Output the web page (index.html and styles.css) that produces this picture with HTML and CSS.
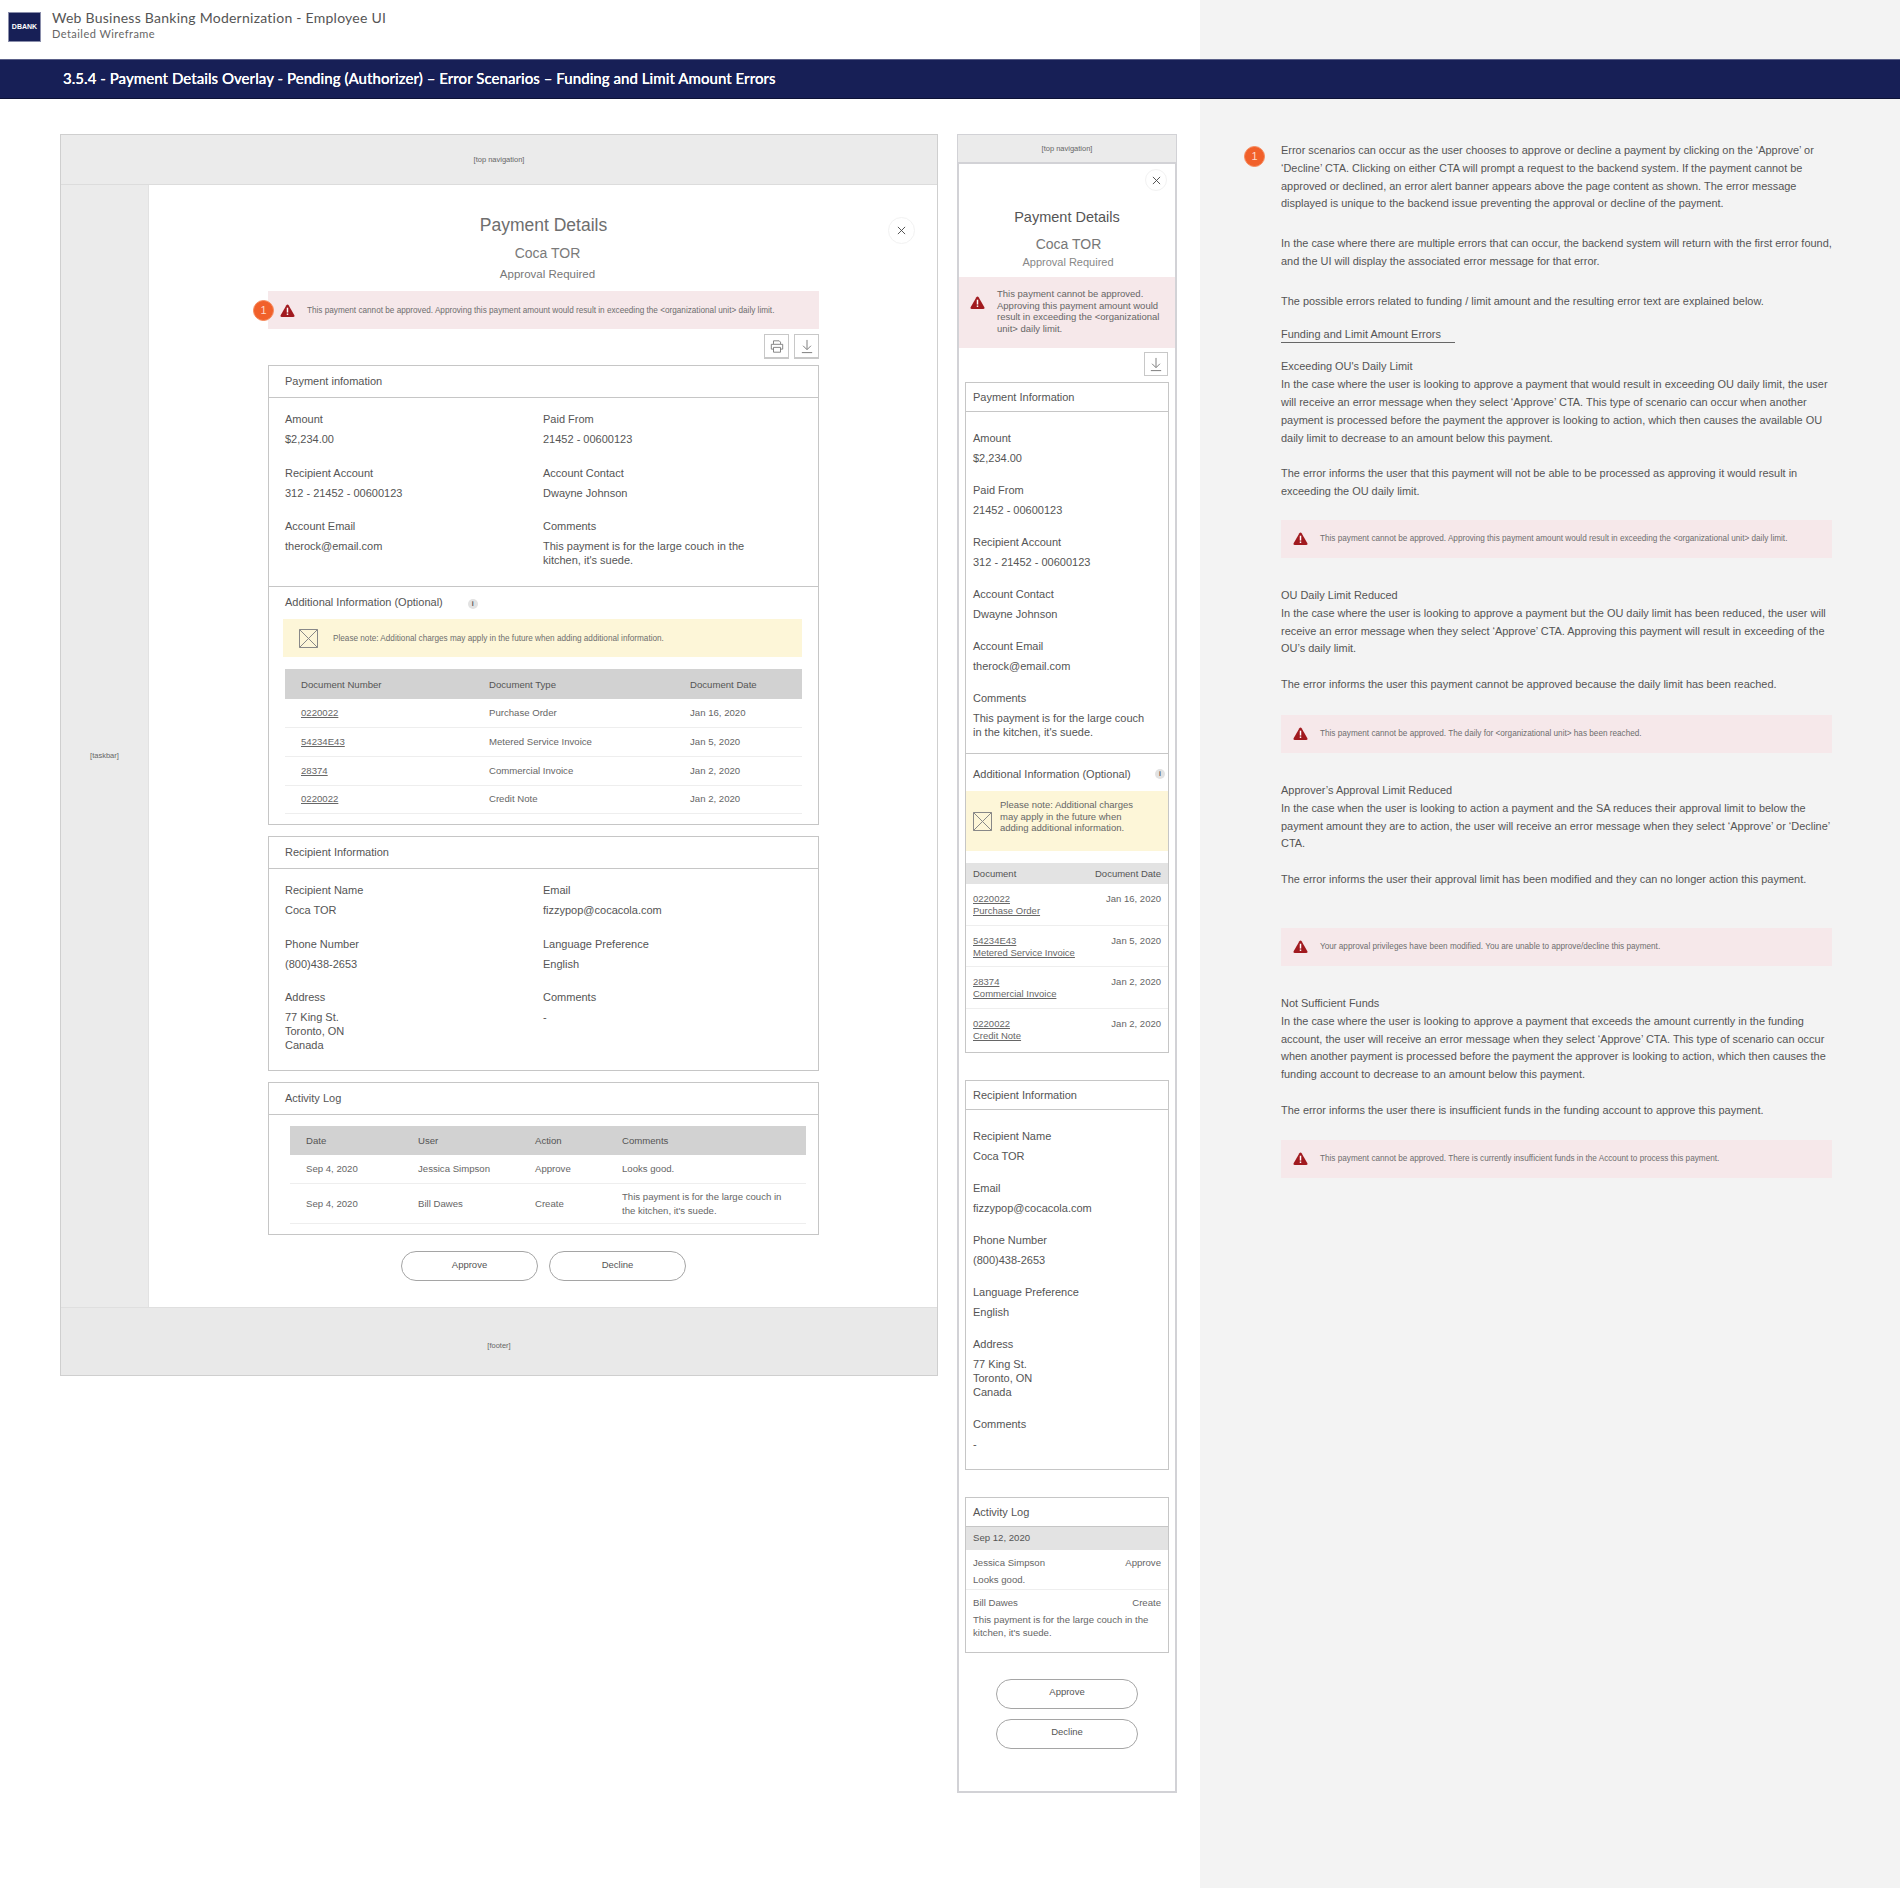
FILE: index.html
```html
<!DOCTYPE html>
<html lang="en">
<head>
    <meta charset="UTF-8">
    <meta name="viewport" content="width=device-width, initial-scale=1.0">
    <title>Web Business Banking Modernization - Employee UI</title>
    <link rel="stylesheet" href="styles.css">
</head>
<body>
    <svg class="defs" width="0" height="0">
        <symbol id="warn" viewBox="0 0 16 14">
            <path d="M8 .6c.5 0 .9.3 1.2.8l6.2 10.6c.5.9-.1 1.9-1.1 1.9H1.7c-1 0-1.6-1-1.1-1.9L6.800 1.400C7.100.9 7.500.6 8 .6z" fill="#a11a1f"/>
            <rect x="7.200" y="4" width="1.600" height="5.200" fill="#fff"/>
            <rect x="7.200" y="10.200" width="1.600" height="1.600" fill="#fff"/>
        </symbol>
        <symbol id="down" viewBox="0 0 14 16">
            <path d="M7 1v10M2.800 7.200 7 11.400l4.200-4.200M1.500 14.500h11" fill="none" stroke="#777" stroke-width="1"/>
        </symbol>
        <symbol id="print" viewBox="0 0 16 16">
            <path d="M4 5V1.500h6.500L12 3v2M4 11H1.500V5.500h13V11H12M4 9h8v5.500H4z" fill="none" stroke="#777" stroke-width="1"/>
        </symbol>
        <symbol id="close" viewBox="0 0 10 10">
            <path d="M1 1l8 8M9 1l-8 8" fill="none" stroke="#444" stroke-width="1"/>
        </symbol>
        <symbol id="crossbox" viewBox="0 0 19 19">
            <path d="M.5.500h18v18H.5zM.5.500l18 18M18.500.500l-18 18" fill="none" stroke="#888" stroke-width="1"/>
        </symbol>
    </svg>

    <header class="doc-header">
        <div class="logo">DBANK</div>
        <div class="doc-text">
            <div class="doc-title">Web Business Banking Modernization - Employee UI</div>
            <div class="doc-sub">Detailed Wireframe</div>
        </div>
    </header>
    <div class="section-bar">3.5.4 - Payment Details Overlay - Pending (Authorizer) – Error Scenarios – Funding and Limit Amount Errors</div>

    <main class="sheet">
        <div class="wires">
            <!-- desktop frame -->
            <section class="desktop">
                <div class="top-nav">[top navigation]</div>
                <div class="desktop-mid">
                    <div class="taskbar">[taskbar]</div>
                    <div class="overlay">
                        <span class="close-btn"><svg><use href="#close"/></svg></span>
                        <h2 class="overlay-title">Payment Details</h2>
                        <div class="overlay-name">Coca TOR</div>
                        <div class="overlay-status">Approval Required</div>

                        <div class="alert alert-flag">
                            <span class="badge badge-over">1</span>
                            <svg class="warn-icon"><use href="#warn"/></svg>
                            <span>This payment cannot be approved. Approving this payment amount would result in exceeding the &lt;organizational unit&gt; daily limit.</span>
                        </div>

                        <div class="tools">
                            <span class="tool"><svg><use href="#print"/></svg></span>
                            <span class="tool"><svg><use href="#down"/></svg></span>
                        </div>

                        <div class="card">
                            <div class="card-head">Payment infomation</div>
                            <div class="fields">
                                <div class="field"><label>Amount</label><div>$2,234.00</div></div>
                                <div class="field"><label>Paid From</label><div>21452 - 00600123</div></div>
                                <div class="field"><label>Recipient Account</label><div>312 - 21452 - 00600123</div></div>
                                <div class="field"><label>Account Contact</label><div>Dwayne Johnson</div></div>
                                <div class="field"><label>Account Email</label><div>therock@email.com</div></div>
                                <div class="field"><label>Comments</label><div>This payment is for the large couch in the<br>kitchen, it's suede.</div></div>
                            </div>
                            <div class="extra">
                                <div class="extra-title">Additional Information (Optional)<span class="info">i</span></div>
                                <div class="note">
                                    <svg class="note-icon"><use href="#crossbox"/></svg>
                                    <span>Please note: Additional charges may apply in the future when adding additional information.</span>
                                </div>
                                <table class="grid docs">
                                    <thead>
                                        <tr><th>Document Number</th><th>Document Type</th><th>Document Date</th></tr>
                                    </thead>
                                    <tbody>
                                        <tr><td><u>0220022</u></td><td>Purchase Order</td><td>Jan 16, 2020</td></tr>
                                        <tr><td><u>54234E43</u></td><td>Metered Service Invoice</td><td>Jan 5, 2020</td></tr>
                                        <tr><td><u>28374</u></td><td>Commercial Invoice</td><td>Jan 2, 2020</td></tr>
                                        <tr><td><u>0220022</u></td><td>Credit Note</td><td>Jan 2, 2020</td></tr>
                                    </tbody>
                                </table>
                            </div>
                        </div>

                        <div class="card">
                            <div class="card-head">Recipient Information</div>
                            <div class="fields fields-short">
                                <div class="field"><label>Recipient Name</label><div>Coca TOR</div></div>
                                <div class="field"><label>Email</label><div>fizzypop@cocacola.com</div></div>
                                <div class="field"><label>Phone Number</label><div>(800)438-2653</div></div>
                                <div class="field"><label>Language Preference</label><div>English</div></div>
                                <div class="field"><label>Address</label><div>77 King St.<br>Toronto, ON<br>Canada</div></div>
                                <div class="field"><label>Comments</label><div>-</div></div>
                            </div>
                        </div>

                        <div class="card">
                            <div class="card-head">Activity Log</div>
                            <table class="grid log">
                                <thead>
                                    <tr><th>Date</th><th>User</th><th>Action</th><th>Comments</th></tr>
                                </thead>
                                <tbody>
                                    <tr><td>Sep 4, 2020</td><td>Jessica Simpson</td><td>Approve</td><td>Looks good.</td></tr>
                                    <tr><td>Sep 4, 2020</td><td>Bill Dawes</td><td>Create</td><td>This payment is for the large couch in<br>the kitchen, it's suede.</td></tr>
                                </tbody>
                            </table>
                        </div>

                        <div class="actions">
                            <button>Approve</button>
                            <button>Decline</button>
                        </div>
                    </div>
                </div>
                <div class="footer">[footer]</div>
            </section>

            <!-- mobile frame -->
            <section class="mobile">
                <div class="top-nav top-nav-m">[top navigation]</div>
                <span class="close-btn close-btn-m"><svg><use href="#close"/></svg></span>
                <h2 class="m-title">Payment Details</h2>
                <div class="m-name">Coca TOR</div>
                <div class="m-status">Approval Required</div>
                <div class="m-alert">
                    <svg class="warn-icon"><use href="#warn"/></svg>
                    <span>This payment cannot be approved.<br>Approving this payment amount would<br>result in exceeding the &lt;organizational<br>unit&gt; daily limit.</span>
                </div>
                <div class="tools tools-m">
                    <span class="tool"><svg><use href="#down"/></svg></span>
                </div>

                <div class="m-card">
                    <div class="m-head">Payment Information</div>
                    <div class="m-fields">
                        <div class="field"><label>Amount</label><div>$2,234.00</div></div>
                        <div class="field"><label>Paid From</label><div>21452 - 00600123</div></div>
                        <div class="field"><label>Recipient Account</label><div>312 - 21452 - 00600123</div></div>
                        <div class="field"><label>Account Contact</label><div>Dwayne Johnson</div></div>
                        <div class="field"><label>Account Email</label><div>therock@email.com</div></div>
                        <div class="field"><label>Comments</label><div>This payment is for the large couch<br>in the kitchen, it's suede.</div></div>
                    </div>
                    <div class="m-extra">
                        <div class="m-extra-title"><span>Additional Information (Optional)</span><span class="info">i</span></div>
                        <div class="m-note">
                            <svg class="note-icon"><use href="#crossbox"/></svg>
                            <span>Please note: Additional charges<br>may apply in the future when<br>adding additional information.</span>
                        </div>
                        <div class="m-doc-head"><span>Document</span><span>Document Date</span></div>
                        <div class="m-doc"><div><u>0220022</u><br><u>Purchase Order</u></div><span>Jan 16, 2020</span></div>
                        <div class="m-doc"><div><u>54234E43</u><br><u>Metered Service Invoice</u></div><span>Jan 5, 2020</span></div>
                        <div class="m-doc"><div><u>28374</u><br><u>Commercial Invoice</u></div><span>Jan 2, 2020</span></div>
                        <div class="m-doc m-doc-last"><div><u>0220022</u><br><u>Credit Note</u></div><span>Jan 2, 2020</span></div>
                    </div>
                </div>

                <div class="m-card m-card-recipient">
                    <div class="m-head">Recipient Information</div>
                    <div class="m-fields m-fields-end">
                        <div class="field"><label>Recipient Name</label><div>Coca TOR</div></div>
                        <div class="field"><label>Email</label><div>fizzypop@cocacola.com</div></div>
                        <div class="field"><label>Phone Number</label><div>(800)438-2653</div></div>
                        <div class="field"><label>Language Preference</label><div>English</div></div>
                        <div class="field"><label>Address</label><div>77 King St.<br>Toronto, ON<br>Canada</div></div>
                        <div class="field"><label>Comments</label><div>-</div></div>
                    </div>
                </div>

                <div class="m-card m-card-log">
                    <div class="m-head">Activity Log</div>
                    <div class="m-log-date">Sep 12, 2020</div>
                    <div class="m-log-row m-log-first">
                        <div class="m-log-top"><span>Jessica Simpson</span><span>Approve</span></div>
                        <div>Looks good.</div>
                    </div>
                    <div class="m-log-row m-log-last">
                        <div class="m-log-top"><span>Bill Dawes</span><span>Create</span></div>
                        <div>This payment is for the large couch in the<br>kitchen, it's suede.</div>
                    </div>
                </div>

                <div class="m-actions">
                    <button>Approve</button>
                    <button>Decline</button>
                </div>
            </section>
        </div>

        <!-- annotation column -->
        <aside class="notes">
            <span class="badge badge-note">1</span>
            <p class="first">Error scenarios can occur as the user chooses to approve or decline a payment by clicking on the ‘Approve’ or<br>‘Decline’ CTA. Clicking on either CTA will prompt a request to the backend system. If the payment cannot be<br>approved or declined, an error alert banner appears above the page content as shown. The error message<br>displayed is unique to the backend issue preventing the approval or decline of the payment.</p>
            <p class="gap-l">In the case where there are multiple errors that can occur, the backend system will return with the first error found,<br>and the UI will display the associated error message for that error.</p>
            <p class="gap-l">The possible errors related to funding / limit amount and the resulting error text are explained below.</p>
            <p class="gap-s"><span class="notes-heading">Funding and Limit Amount Errors</span></p>
            <p class="gap-s">Exceeding OU's Daily Limit<br>In the case where the user is looking to approve a payment that would result in exceeding OU daily limit, the user<br>will receive an error message when they select ‘Approve’ CTA. This type of scenario can occur when another<br>payment is processed before the payment the approver is looking to action, which then causes the available OU<br>daily limit to decrease to an amount below this payment.</p>
            <p class="gap-m">The error informs the user that this payment will not be able to be processed as approving it would result in<br>exceeding the OU daily limit.</p>
            <div class="alert alert-note alert-near">
                <svg class="warn-icon"><use href="#warn"/></svg>
                <span>This payment cannot be approved. Approving this payment amount would result in exceeding the &lt;organizational unit&gt; daily limit.</span>
            </div>
            <p class="gap-xl">OU Daily Limit Reduced<br>In the case where the user is looking to approve a payment but the OU daily limit has been reduced, the user will<br>receive an error message when they select ‘Approve’ CTA. Approving this payment will result in exceeding of the<br>OU’s daily limit.</p>
            <p class="gap-m">The error informs the user this payment cannot be approved because the daily limit has been reached.</p>
            <div class="alert alert-note alert-low">
                <svg class="warn-icon"><use href="#warn"/></svg>
                <span>This payment cannot be approved. The daily for &lt;organizational unit&gt; has been reached.</span>
            </div>
            <p class="gap-xl">Approver’s Approval Limit Reduced<br>In the case when the user is looking to action a payment and the SA reduces their approval limit to below the<br>payment amount they are to action, the user will receive an error message when they select ‘Approve’ or ‘Decline’<br>CTA.</p>
            <p class="gap-m">The error informs the user their approval limit has been modified and they can no longer action this payment.</p>
            <div class="alert alert-note alert-far">
                <svg class="warn-icon"><use href="#warn"/></svg>
                <span>Your approval privileges have been modified. You are unable to approve/decline this payment.</span>
            </div>
            <p class="gap-xl">Not Sufficient Funds<br>In the case where the user is looking to approve a payment that exceeds the amount currently in the funding<br>account, the user will receive an error message when they select ‘Approve’ CTA. This type of scenario can occur<br>when another payment is processed before the payment the approver is looking to action, which then causes the<br>funding account to decrease to an amount below this payment.</p>
            <p class="gap-m">The error informs the user there is insufficient funds in the funding account to approve this payment.</p>
            <div class="alert alert-note">
                <svg class="warn-icon"><use href="#warn"/></svg>
                <span>This payment cannot be approved. There is currently insufficient funds in the Account to process this payment.</span>
            </div>
        </aside>
    </main>
</body>
</html>
```

FILE: styles.css
```css
* {
    box-sizing: border-box;
}
body {
    margin: 0;
    width: 1900px;
    height: 1888px;
    overflow: hidden;
    font-family: "Liberation Sans", Arial, sans-serif;
    color: #555;
    background-color: #f3f3f3;
}
.defs {
    position: absolute;
}

/* document header */
.doc-header {
    width: 1200px;
    height: 59px;
    background: #fff;
    padding: 12px 0 0 8px;
    display: flex;
    gap: 11px;
}
.logo {
    width: 33px;
    height: 30px;
    background: #171f56;
    border: 1px solid #8a8eab;
    color: #fff;
    font-size: 7px;
    font-weight: bold;
    line-height: 28px;
    text-align: center;
}
.doc-text {
    margin-top: -1px;
}
.doc-title {
    font-family: Lato, sans-serif;
    font-size: 14px;
    line-height: 14px;
    letter-spacing: 0.25px;
    color: #555;
}
.doc-sub {
    font-family: Lato, sans-serif;
    font-size: 11px;
    line-height: 12px;
    margin-top: 3px;
    letter-spacing: 0.45px;
    color: #666;
}
.section-bar {
    height: 40px;
    padding-left: 63px;
    background: #171f56;
    border-top: 1px solid #5a6088;
    border-bottom: 1px solid #0d1236;
    color: #fff;
    font-family: Lato, sans-serif;
    font-size: 15px;
    font-weight: 500;
    letter-spacing: 0.05px;
    line-height: 37px;
    text-shadow: 0 0 0.4px #fff;
}

.sheet {
    display: flex;
    height: 1789px;
}
.wires {
    width: 1200px;
    background: #fff;
    padding: 35px 0 0 60px;
    display: flex;
    align-items: flex-start;
    gap: 19px;
}

/* desktop frame */
.desktop {
    width: 878px;
    height: 1242px;
    border: 1px solid #cfcfcf;
    display: flex;
    flex-direction: column;
}
.top-nav {
    height: 50px;
    flex: none;
    background: #ebebeb;
    border-bottom: 1px solid #dcdcdc;
    font-size: 7.5px;
    color: #666;
    display: flex;
    align-items: center;
    justify-content: center;
}
.desktop-mid {
    display: flex;
    height: 1122px;
}
.taskbar {
    width: 88px;
    padding-top: 18px;
    background: #ebebeb;
    border-right: 1px solid #e2e2e2;
    font-size: 7.5px;
    color: #666;
    display: flex;
    align-items: center;
    justify-content: center;
}
.overlay {
    position: relative;
    flex: 1;
    padding: 28px 0 0 119px;
    width: 790px;
}
.overlay > * {
    width: 551px;
}
.footer {
    flex: 1;
    padding-top: 7px;
    background: #e9e9e9;
    border-top: 1px solid #dfdfdf;
    font-size: 7.5px;
    color: #666;
    display: flex;
    align-items: center;
    justify-content: center;
}
.overlay-title {
    margin: 0;
    font-size: 17.500px;
    line-height: 24px;
    font-weight: normal;
    text-align: center;
    color: #6e6e6e;
}
.overlay-name {
    margin-top: 6px;
    padding-left: 8px;
    font-size: 14px;
    line-height: 20px;
    text-align: center;
    color: #7a7a7a;
}
.overlay-status {
    margin-top: 2px;
    padding-left: 8px;
    font-size: 11.5px;
    line-height: 18px;
    text-align: center;
    color: #777;
}
.close-btn {
    position: absolute;
    top: 32px;
    left: 739px;
    width: 27px !important;
    height: 27px;
    border: 1px solid #f2f2f2;
    border-radius: 50%;
    display: flex;
    align-items: center;
    justify-content: center;
}
.close-btn svg {
    width: 9px;
    height: 9px;
}

/* alerts */
.alert {
    position: relative;
    height: 38px;
    background: #f6e8ea;
    display: flex;
    align-items: center;
    font-size: 8.200px;
    color: #6e6e6e;
}
.alert-flag {
    margin-top: 8px;
    padding-left: 12px;
}
.alert-note {
    padding-left: 12px;
}
.warn-icon {
    flex: none;
    width: 15px;
    height: 13px;
    margin-right: 12px;
}
.badge {
    position: absolute;
    width: 21px;
    height: 21px;
    border-radius: 50%;
    background: #f1602a;
    border: 1px solid #f68a5c;
    color: #ffd9c8;
    font-size: 11px;
    line-height: 19px;
    text-align: center;
}
.badge-over {
    left: -15px;
    top: 9px;
}

.tools {
    margin-top: 5px;
    height: 25px;
    display: flex;
    justify-content: flex-end;
    gap: 5px;
}
.tool {
    width: 25px;
    height: 25px;
    border: 1px solid #c8c8c8;
    border-bottom-width: 2px;
    display: flex;
    align-items: center;
    justify-content: center;
}
.tool svg {
    width: 14px;
    height: 15px;
}

/* cards */
.card {
    margin-top: 11px;
    border: 1px solid #c6c6c6;
    background: #fff;
}
.tools + .card {
    margin-top: 6px;
}
.card-head {
    height: 32px;
    padding-left: 16px;
    border-bottom: 1px solid #c6c6c6;
    font-size: 11px;
    line-height: 31px;
    color: #555;
}
.fields {
    display: grid;
    grid-template-columns: 258px 1fr;
    row-gap: 19.500px;
    padding: 14px 16px 19px;
    font-size: 11px;
    line-height: 14px;
}
.fields-short {
    padding-bottom: 18px;
}
.field label {
    display: block;
    margin-bottom: 6px;
}
.extra {
    border-top: 1px solid #c6c6c6;
    padding: 8px 16px 10px;
}
.extra-title {
    font-size: 11px;
    line-height: 14px;
}
.info {
    display: inline-block;
    width: 10px;
    height: 10px;
    margin-left: 25px;
    border-radius: 50%;
    background: #e2e2e2;
    color: #555;
    font-size: 7px;
    font-weight: bold;
    line-height: 10px;
    text-align: center;
}
.note {
    margin: 10px 0 0 -2px;
    height: 38px;
    background: #fdf6d8;
    padding-left: 16px;
    display: flex;
    align-items: center;
    font-size: 8.200px;
    color: #6e6e6e;
}
.note-icon {
    flex: none;
    width: 19px;
    height: 19px;
    margin-right: 15px;
}
.grid {
    width: 100%;
    table-layout: fixed;
    border-collapse: collapse;
    font-size: 9.600px;
}
.grid th {
    height: 29px;
    padding: 0 0 0 16px;
    background: #d2d2d2;
    font-weight: normal;
    text-align: left;
    color: #555;
}
.grid td {
    padding: 0 0 0 16px;
    height: 28.700px;
    border-bottom: 1px solid #eee;
    line-height: 14px;
    color: #666;
}
.docs {
    margin-top: 12px;
}
.docs th {
    height: 30px;
}
.docs th:nth-child(1) {
    width: 204px;
}
.docs th:nth-child(2) {
    width: 201px;
}
.docs td + td, .docs th + th {
    padding-left: 0;
}
.log {
    width: 516px;
    margin: 11px 0 10px 21px;
}
.log th:nth-child(1) {
    width: 128px;
}
.log th:nth-child(2) {
    width: 117px;
}
.log th:nth-child(3) {
    width: 87px;
}
.log td + td, .log th + th {
    padding-left: 0;
}
.log tr:last-child td {
    height: 40px;
}
.actions {
    margin-top: 16px;
    display: flex;
    justify-content: center;
    gap: 11px;
}
button {
    width: 137px;
    height: 30px;
    padding: 0 0 4px;
    border: 1px solid #a5a5a5;
    border-radius: 15px;
    background: #fff;
    font-family: inherit;
    font-size: 9.500px;
    color: #555;
}

/* mobile frame */
.mobile {
    position: relative;
    width: 220px;
    height: 1659px;
    border: 2px solid #d2d2d6;
    border-top: 1px solid #d2d2d6;
}
.top-nav-m {
    height: 29px;
    margin: 0 -1px;
    border-bottom: 2px solid #d2d2d6;
    font-size: 7.500px;
}
.close-btn-m {
    top: 34px;
    left: 186px;
    width: 22px !important;
    height: 22px;
}
.m-title {
    margin: 43px 0 0;
    font-size: 14.500px;
    line-height: 20px;
    font-weight: normal;
    text-align: center;
    color: #555;
}
.m-name {
    margin-top: 7px;
    padding-left: 3px;
    font-size: 14px;
    line-height: 20px;
    text-align: center;
    color: #777;
}
.m-status {
    margin-top: 2px;
    padding-left: 2px;
    font-size: 11px;
    line-height: 12px;
    text-align: center;
    color: #888;
}
.m-alert {
    margin-top: 9px;
    height: 71px;
    background: #f6e8ea;
    padding: 11px 0 0 11px;
    display: flex;
    font-size: 9.500px;
    line-height: 11.700px;
    color: #666;
}
.m-alert .warn-icon {
    margin: 8px 12px 0 0;
}
.tools-m {
    margin: 4px 7px 0 0;
    height: 24px;
}
.tools-m .tool {
    width: 24px;
    height: 24px;
    border-bottom-width: 1px;
}
.m-card {
    margin: 6px 6px 0;
    border: 1px solid #c6c6c6;
    font-size: 11px;
}
.m-card-recipient {
    margin-top: 27px;
}
.m-card-log {
    margin-top: 27px;
}
.m-head {
    height: 29px;
    padding-left: 7px;
    border-bottom: 1px solid #c6c6c6;
    font-size: 11px;
    line-height: 28px;
}
.m-fields {
    padding: 19px 7px 14px;
    display: grid;
    row-gap: 18px;
    line-height: 14px;
}
.m-fields-end {
    padding-bottom: 18px;
}
.m-extra {
    border-top: 1px solid #c6c6c6;
    padding-top: 13px;
}
.m-extra-title {
    padding-left: 7px;
    line-height: 14px;
    display: flex;
    align-items: center;
    justify-content: space-between;
    padding-right: 3px;
    white-space: nowrap;
}
.m-extra-title .info {
    margin-left: 0;
}
.m-note {
    margin-top: 10px;
    height: 60px;
    background: #fdf6d8;
    padding: 8px 0 0 7px;
    display: flex;
    align-items: flex-start;
    font-size: 9.500px;
    line-height: 11.700px;
    color: #666;
}
.m-note .note-icon {
    margin: 13px 8px 0 0;
}
.m-doc-head {
    margin-top: 12px;
    height: 21px;
    background: #e3e3e3;
    padding: 0 7px;
    display: flex;
    align-items: center;
    justify-content: space-between;
    font-size: 9.500px;
}
.m-doc {
    height: 41.500px;
    padding: 9px 7px 0;
    border-bottom: 1px solid #eee;
    display: flex;
    justify-content: space-between;
    font-size: 9.500px;
    line-height: 12px;
    color: #666;
}
.m-doc-last {
    border-bottom: 0;
    height: 43px;
}
.m-log-date {
    height: 23px;
    padding-left: 7px;
    background: #e3e3e3;
    font-size: 9.600px;
    line-height: 22px;
}
.m-log-row {
    padding: 6px 7px 5px;
    font-size: 9.600px;
    line-height: 13px;
    color: #666;
}
.m-log-first {
    height: 40px;
    border-bottom: 1px solid #eee;
}
.m-log-last {
    height: 62px;
}
.m-log-top {
    display: flex;
    justify-content: space-between;
    margin-bottom: 4px;
}
.m-actions {
    margin-top: 26px;
    display: flex;
    flex-direction: column;
    align-items: center;
    gap: 10px;
}
.m-actions button {
    width: 142px;
}

/* notes column */
.notes {
    position: relative;
    flex: 1;
    padding-left: 81px;
    width: 700px;
}
.notes > p, .alert-note {
    width: 551px;
}
.notes p {
    margin: 0;
    font-size: 10.950px;
    line-height: 17.800px;
    white-space: nowrap;
    color: #555;
}
.notes .first {
    margin-top: 43px;
}
.badge-note {
    left: 44px;
    top: 47px;
}
.notes .gap-s {
    margin-top: 15px;
}
.notes .gap-m {
    margin-top: 18px;
}
.notes .gap-l {
    margin-top: 22px;
}
.notes .gap-xl {
    margin-top: 29px;
}
.notes-heading {
    display: inline-block;
    width: 174px;
    line-height: 16px;
    border-bottom: 1px solid #666;
}
.alert-note {
    margin-top: 20px;
}
.alert-near {
    margin-top: 19px;
}
.alert-low {
    margin-top: 21px;
}
.alert-far {
    margin-top: 39px;
}
```
